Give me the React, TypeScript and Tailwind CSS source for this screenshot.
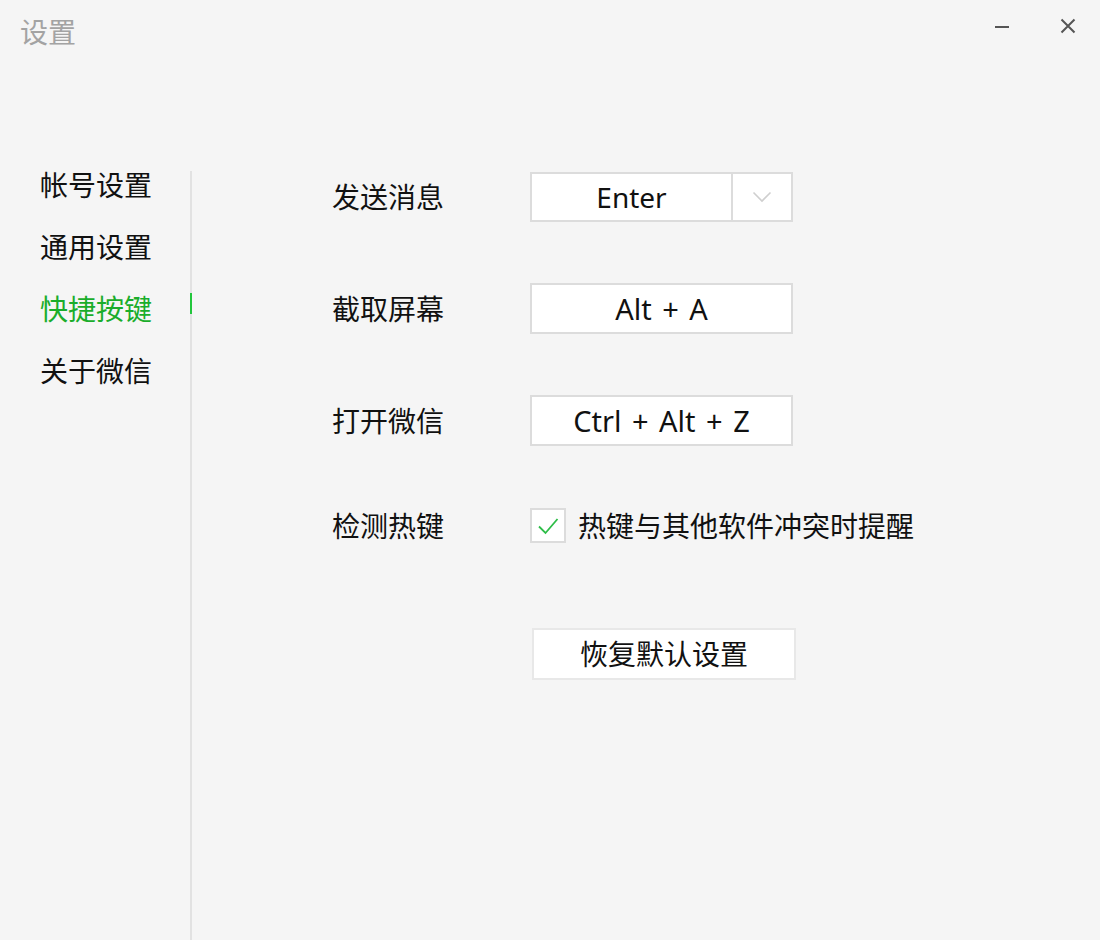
import type { ReactNode } from "react";

const menu = ["帐号设置", "通用设置", "快捷按键", "关于微信"];
const active = 2;

function Row({ label, children }: { label: string; children: ReactNode }) {
  return (
    <div className="flex items-center">
      <div className="w-[198px] text-[28px] leading-[28px] text-[#111]">{label}</div>
      {children}
    </div>
  );
}

function KeyBox({ text }: { text: string }) {
  return (
    <div className="w-[263px] h-[51px] bg-white border-2 border-[#dcdcdc] flex items-center justify-center text-[29px] text-[#111] [word-spacing:3px]">
      {text}
    </div>
  );
}

export default function App() {
  return (
    <div
      className="w-[1100px] h-[940px] bg-[#f5f5f5] flex flex-col overflow-hidden"
      style={{ fontFamily: '"Noto Sans", "Noto Sans CJK SC", sans-serif' }}
    >
      {/* 标题栏 */}
      <div className="h-[171px] flex items-start justify-between">
        <div className="pl-[20px] pt-[14px] text-[28px] leading-[36px] text-[#a3a3a3]">设置</div>
        <div className="flex items-center gap-[50px] pr-[24px] pt-[18px]">
          <svg width="16" height="16" viewBox="0 0 16 16">
            <path d="M1 9h14" stroke="#555" strokeWidth="2" />
          </svg>
          <svg width="16" height="16" viewBox="0 0 16 16">
            <path d="M1.5 1.5l13 13M14.5 1.5l-13 13" stroke="#555" strokeWidth="2" />
          </svg>
        </div>
      </div>

      <div className="flex flex-1">
        {/* 侧边栏 */}
        <div className="w-[192px] border-r-2 border-[#e2e2e2] flex flex-col gap-[34px] pl-[40px]">
          {menu.map((m, i) => (
            <div
              key={m}
              className={
                "relative text-[28px] leading-[28px] " +
                (i === active ? "text-[#1aad2b]" : "text-[#111]")
              }
            >
              {m}
              {i === active ? (
                <div className="absolute right-[-2px] top-[-2px] w-[2px] h-[21px] bg-[#22c63c]" />
              ) : null}
            </div>
          ))}
        </div>

        {/* 内容 */}
        <div className="flex flex-col pl-[140px] pt-[1px]">
          <div className="flex flex-col gap-[61px]">
            <Row label="发送消息">
              <div className="w-[263px] h-[50px] bg-white border-2 border-[#dcdcdc] flex">
                <div className="flex-1 flex items-center justify-center text-[28px] text-[#111] border-r-2 border-[#dcdcdc]">
                  Enter
                </div>
                <div className="w-[58px] flex items-center justify-center">
                  <svg width="20" height="12" viewBox="0 0 20 12">
                    <path d="M1.5 1.5l8.5 8.5 8.5-8.5" fill="none" stroke="#cfcfcf" strokeWidth="1.6" />
                  </svg>
                </div>
              </div>
            </Row>
            <Row label="截取屏幕">
              <KeyBox text="Alt + A" />
            </Row>
            <Row label="打开微信">
              <KeyBox text="Ctrl + Alt + Z" />
            </Row>
          </div>

          <div className="mt-[62px]">
            <Row label="检测热键">
              <div className="flex items-center gap-[12px]">
                <div className="w-[36px] h-[35px] bg-white border-2 border-[#dcdcdc] flex items-center justify-center">
                  <svg width="22" height="18" viewBox="0 0 22 18">
                    <path d="M2 9.5l6.5 6.5L20.5 2" fill="none" stroke="#2ebd48" strokeWidth="1.8" />
                  </svg>
                </div>
                <span className="text-[28px] leading-[28px] text-[#111]">热键与其他软件冲突时提醒</span>
              </div>
            </Row>
          </div>

          <div className="mt-[85px] pl-[200px]">
            <button className="w-[264px] h-[52px] bg-white border-2 border-[#e8e8e8] text-[28px] text-[#111] flex items-center justify-center">
              恢复默认设置
            </button>
          </div>
        </div>
      </div>
    </div>
  );
}
